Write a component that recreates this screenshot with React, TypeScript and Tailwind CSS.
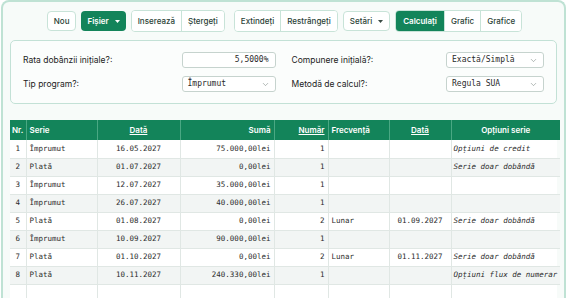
import { ChevronDown } from "lucide-react"

type Row = {
  nr: number
  serie: string
  data: string
  suma: string
  numar: string
  frecv: string
  data2: string
  opt: string
}

const rows: Row[] = [
  { nr: 1, serie: "Împrumut", data: "16.05.2027", suma: "75.000,00lei", numar: "1", frecv: "", data2: "", opt: "Opțiuni de credit" },
  { nr: 2, serie: "Plată", data: "01.07.2027", suma: "0,00lei", numar: "1", frecv: "", data2: "", opt: "Serie doar dobândă" },
  { nr: 3, serie: "Împrumut", data: "12.07.2027", suma: "35.000,00lei", numar: "1", frecv: "", data2: "", opt: "" },
  { nr: 4, serie: "Împrumut", data: "26.07.2027", suma: "40.000,00lei", numar: "1", frecv: "", data2: "", opt: "" },
  { nr: 5, serie: "Plată", data: "01.08.2027", suma: "0,00lei", numar: "2", frecv: "Lunar", data2: "01.09.2027", opt: "Serie doar dobândă" },
  { nr: 6, serie: "Împrumut", data: "10.09.2027", suma: "90.000,00lei", numar: "1", frecv: "", data2: "", opt: "" },
  { nr: 7, serie: "Plată", data: "01.10.2027", suma: "0,00lei", numar: "2", frecv: "Lunar", data2: "01.11.2027", opt: "Serie doar dobândă" },
  { nr: 8, serie: "Plată", data: "10.11.2027", suma: "240.330,00lei", numar: "1", frecv: "", data2: "", opt: "Opțiuni flux de numerar" },
]

const btn = "h-5 px-[6px] flex items-center text-[8px] font-medium text-[#2b3f37] bg-white"

function Caret({ white }: { white?: boolean }) {
  return (
    <svg width="5" height="3" viewBox="0 0 5 3" className="ml-[6px]">
      <path d="M0 0h5L2.5 3z" fill={white ? "#ffffff" : "#3a4a44"} />
    </svg>
  )
}

function Select({ value, w }: { value: string; w: string }) {
  return (
    <div className={`flex h-4 items-center justify-between rounded-[3px] border border-[#c6d3ce] bg-white pl-[5px] pr-[5px] ${w}`}>
      <span className="font-['DejaVu_Sans_Mono',monospace] text-[8px] text-[#2a2a2a]">{value}</span>
      <ChevronDown size={9} strokeWidth={1.5} className="text-[#7a8580]" />
    </div>
  )
}

export default function App() {
  return (
    <div className="min-h-screen bg-white font-['Inter',sans-serif]">
      <div className="ml-px w-[565px] overflow-hidden rounded-t-[8px] border-2 border-b-0 border-[#bfe2d4] bg-[#f7fbf9]">
        {/* toolbar */}
        <div className="flex items-center justify-center gap-[5px] pt-[8px] pb-[8px] pl-[2px]">
          <button className={`${btn} rounded-[4px] border border-[#c8e3d8]`}>Nou</button>
          <button className="flex h-5 items-center rounded-[4px] bg-[#13845a] px-[6px] text-[8px] font-semibold text-white">
            Fișier
            <Caret white />
          </button>
          <div className="flex overflow-hidden rounded-[4px] border border-[#c8e3d8]">
            <button className={btn}>Inserează</button>
            <button className={`${btn} border-l border-[#c8e3d8]`}>Ștergeți</button>
          </div>
          <div className="ml-[4px] flex overflow-hidden rounded-[4px] border border-[#c8e3d8]">
            <button className={btn}>Extindeți</button>
            <button className={`${btn} border-l border-[#c8e3d8]`}>Restrângeți</button>
          </div>
          <button className={`${btn} rounded-[4px] border border-[#c8e3d8]`}>
            Setări
            <Caret />
          </button>
          <div className="flex overflow-hidden rounded-[4px] border border-[#c8e3d8]">
            <button className="flex h-5 items-center bg-[#13845a] px-[7px] text-[8px] font-semibold text-white">Calculați</button>
            <button className={`${btn} border-l border-[#c8e3d8]`}>Grafic</button>
            <button className={`${btn} border-l border-[#c8e3d8]`}>Grafice</button>
          </div>
        </div>

        {/* settings panel */}
        <div className="mx-[7px] rounded-[5px] border border-[#c3e1d6] bg-[#fbfdfc] px-[12px] pt-[11px] pb-[11px]">
          <div className="grid grid-cols-2 gap-x-4 gap-y-2">
            <div className="flex items-center justify-between">
              <span className="text-[8.5px] text-[#222]">Rata dobânzii inițiale?:</span>
              <div className="flex h-4 w-[94px] items-center justify-end rounded-[3px] border border-[#c6d3ce] bg-white pr-[6px]">
                <span className="font-['DejaVu_Sans_Mono',monospace] text-[8px] text-[#2a2a2a]">5,5000%</span>
              </div>
            </div>
            <div className="flex items-center justify-between">
              <span className="text-[8.5px] text-[#222]">Compunere inițială?:</span>
              <Select value="Exactă/Simplă" w="w-[98px]" />
            </div>
            <div className="flex items-center justify-between">
              <span className="text-[8.5px] text-[#222]">Tip program?:</span>
              <Select value="Împrumut" w="w-[94px]" />
            </div>
            <div className="flex items-center justify-between">
              <span className="text-[8.5px] text-[#222]">Metodă de calcul?:</span>
              <Select value="Regula SUA" w="w-[98px]" />
            </div>
          </div>
        </div>

        {/* table */}
        <div className="mx-[7px] mt-[16px] bg-white">
          <table className="w-[550px] table-fixed border-collapse">
            <colgroup>
              <col className="w-[16px]" />
              <col className="w-[71px]" />
              <col className="w-[83px]" />
              <col className="w-[94px]" />
              <col className="w-[54px]" />
              <col className="w-[61px]" />
              <col className="w-[62px]" />
              <col className="w-[109px]" />
            </colgroup>
            <thead>
              <tr className="h-5 bg-[#13845a] text-[8px] text-white">
                <th className="border-r border-[#4aa883] px-[2px] text-left font-semibold">Nr.</th>
                <th className="border-r border-[#4aa883] px-[3px] text-left font-semibold">Serie</th>
                <th className="border-r border-[#4aa883] px-[3px] text-center font-semibold underline">Dată</th>
                <th className="border-r border-[#4aa883] px-[3px] text-right font-semibold">Sumă</th>
                <th className="border-r border-[#4aa883] px-[3px] text-right font-semibold underline">Număr</th>
                <th className="border-r border-[#4aa883] px-[3px] text-left font-semibold">Frecvență</th>
                <th className="border-r border-[#4aa883] px-[3px] text-center font-semibold underline">Dată</th>
                <th className="px-[3px] text-center font-semibold">Opțiuni serie</th>
              </tr>
            </thead>
            <tbody className="font-['DejaVu_Sans_Mono',monospace] text-[7.5px] text-[#2c2c2c]">
              {rows.map((r) => (
                <tr key={r.nr} className="h-[18px] border-b border-[#e0e7e4] even:bg-[#f2f5f4]">
                  <td className="border-r border-[#e0e7e4] text-center">{r.nr}</td>
                  <td className="border-r border-[#e0e7e4] px-[3px]">{r.serie}</td>
                  <td className="border-r border-[#e0e7e4] text-center">{r.data}</td>
                  <td className="border-r border-[#e0e7e4] px-[3px] text-right">{r.suma}</td>
                  <td className="border-r border-[#e0e7e4] px-[3px] text-right">{r.numar}</td>
                  <td className="border-r border-[#e0e7e4] px-[3px]">{r.frecv}</td>
                  <td className="border-r border-[#e0e7e4] text-center">{r.data2}</td>
                  <td className="whitespace-nowrap px-[2px] italic">{r.opt}</td>
                </tr>
              ))}
              {[9, 10].map((n) => (
                <tr key={n} className="h-[18px] border-b border-[#e0e7e4]">
                  <td className="border-r border-[#e0e7e4]"></td>
                  <td className="border-r border-[#e0e7e4]"></td>
                  <td className="border-r border-[#e0e7e4]"></td>
                  <td className="border-r border-[#e0e7e4]"></td>
                  <td className="border-r border-[#e0e7e4]"></td>
                  <td className="border-r border-[#e0e7e4]"></td>
                  <td className="border-r border-[#e0e7e4]"></td>
                  <td></td>
                </tr>
              ))}
            </tbody>
          </table>
        </div>
      </div>
    </div>
  )
}
